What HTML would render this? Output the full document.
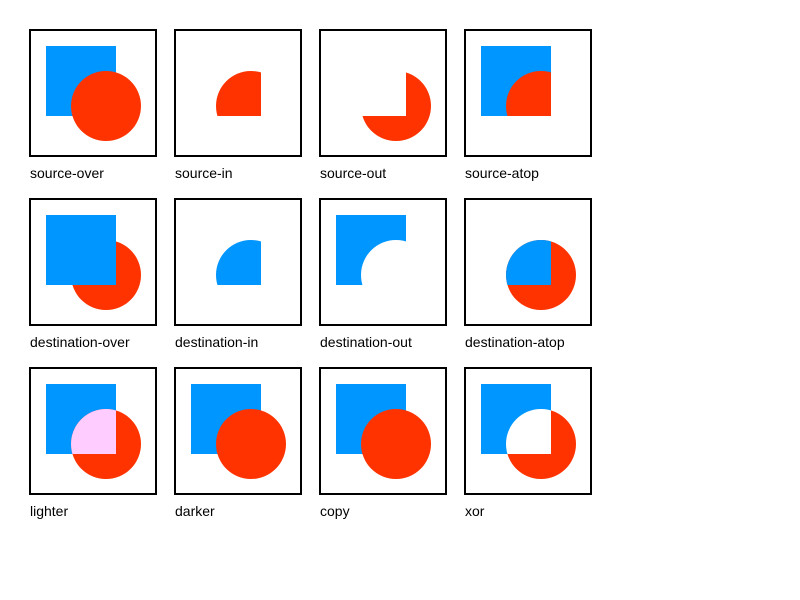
<!DOCTYPE html>
<html><head><style>html,body{margin:0;padding:0;background:#fff;width:800px;height:600px;overflow:hidden}</style></head>
<body>
<svg width="800" height="600" xmlns="http://www.w3.org/2000/svg" font-family="Liberation Sans, sans-serif" font-size="14">
<defs>
<clipPath id="sq"><rect x="17" y="17" width="70" height="70"/></clipPath>
<clipPath id="ci"><circle cx="77" cy="77" r="35"/></clipPath>
<mask id="nsq" maskUnits="userSpaceOnUse" x="0" y="0" width="128" height="128"><rect width="128" height="128" fill="#fff"/><rect x="17" y="17" width="70" height="70" fill="#000"/></mask>
<mask id="nci" maskUnits="userSpaceOnUse" x="0" y="0" width="128" height="128"><rect width="128" height="128" fill="#fff"/><circle cx="77" cy="77" r="35" fill="#000"/></mask>
<rect id="S" x="17" y="17" width="70" height="70" fill="#0096ff"/>
<circle id="C" cx="77" cy="77" r="35" fill="#ff3300"/>
<rect id="B" x="1" y="1" width="126" height="126" fill="none" stroke="#000" stroke-width="2"/>
</defs>
<g fill="#000">
<!-- row 1 -->
<g transform="translate(29,29)"><use href="#S"/><use href="#C"/><use href="#B"/><text x="1" y="149">source-over</text></g>
<g transform="translate(174,29)"><use href="#C" clip-path="url(#sq)"/><use href="#B"/><text x="1" y="149">source-in</text></g>
<g transform="translate(319,29)"><use href="#C" mask="url(#nsq)"/><use href="#B"/><text x="1" y="149">source-out</text></g>
<g transform="translate(464,29)"><use href="#S"/><use href="#C" clip-path="url(#sq)"/><use href="#B"/><text x="1" y="149">source-atop</text></g>
<!-- row 2 -->
<g transform="translate(29,198)"><use href="#C"/><use href="#S"/><use href="#B"/><text x="1" y="149">destination-over</text></g>
<g transform="translate(174,198)"><use href="#S" clip-path="url(#ci)"/><use href="#B"/><text x="1" y="149">destination-in</text></g>
<g transform="translate(319,198)"><use href="#S" mask="url(#nci)"/><use href="#B"/><text x="1" y="149">destination-out</text></g>
<g transform="translate(464,198)"><use href="#C"/><use href="#S" clip-path="url(#ci)"/><use href="#B"/><text x="1" y="149">destination-atop</text></g>
<!-- row 3 -->
<g transform="translate(29,367)"><use href="#S"/><use href="#C"/><rect x="17" y="17" width="70" height="70" fill="#ffccff" clip-path="url(#ci)"/><use href="#B"/><text x="1" y="149">lighter</text></g>
<g transform="translate(174,367)"><use href="#S"/><use href="#C"/><use href="#B"/><text x="1" y="149">darker</text></g>
<g transform="translate(319,367)"><use href="#S"/><use href="#C"/><use href="#B"/><text x="1" y="149">copy</text></g>
<g transform="translate(464,367)"><use href="#S" mask="url(#nci)"/><use href="#C" mask="url(#nsq)"/><use href="#B"/><text x="1" y="149">xor</text></g>
</g>
</svg>
</body></html>
